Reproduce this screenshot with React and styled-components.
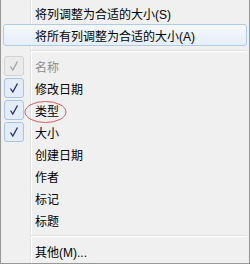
import React from 'react';
import styled, { createGlobalStyle } from 'styled-components';

const GlobalStyle = createGlobalStyle`
  html, body {
    margin: 0;
    padding: 0;
    background: #f0f0f0;
  }
`;

const Menu = styled.div`
  box-sizing: border-box;
  width: 250px;
  height: 264px;
  padding: 2px 2px 0 2px;
  border: 1px solid #979797;
  border-top: none;
  background: linear-gradient(
      to right,
      transparent 29px,
      #e2e3e3 29px,
      #e2e3e3 30px,
      #ffffff 30px,
      #ffffff 31px,
      transparent 31px
    ),
    #f0f0f0;
  font-family: 'Liberation Sans', 'Noto Sans CJK SC', sans-serif;
  font-size: 12px;
  color: #000;
`;

const Item = styled.div`
  position: relative;
  box-sizing: border-box;
  display: flex;
  align-items: center;
  height: 22px;
  border: 1px solid ${(p) => (p.active ? '#aecbe9' : 'transparent')};
  border-radius: 3px;
  background: ${(p) =>
    p.active ? 'linear-gradient(#f6f9fd, #e6eef9)' : 'transparent'};
  color: ${(p) => (p.disabled ? '#8d8d8d' : '#000')};
  white-space: nowrap;
`;

const Gutter = styled.div`
  display: flex;
  align-items: center;
  width: 31px;
  height: 100%;
`;

const CheckBox = styled.div`
  display: flex;
  align-items: center;
  justify-content: center;
  box-sizing: border-box;
  width: 20px;
  height: 20px;
  border: 1px solid ${(p) => (p.disabled ? '#d2d2d2' : '#a9c3e4')};
  border-radius: 3px;
  background: ${(p) => (p.disabled ? '#ebebeb' : '#e4ecf8')};
`;

const Separator = styled.div`
  height: 9px;
  margin-left: 28px;
  display: flex;
  flex-direction: column;
  justify-content: center;
  &::before {
    content: '';
    display: block;
    height: 1px;
    background: #e0e0e0;
  }
  &::after {
    content: '';
    display: block;
    height: 1px;
    background: #ffffff;
  }
`;

const Mark = styled.svg`
  position: absolute;
  left: 20px;
  top: 1px;
  overflow: visible;
`;

function Check({ disabled }) {
  return (
    <CheckBox disabled={disabled}>
      <svg width="18" height="18" viewBox="0 0 18 18">
        <path
          d="M5.5 9.5 L7.8 13 L12.5 4.5"
          fill="none"
          stroke={disabled ? '#a3a3a3' : '#1c2a8c'}
          strokeWidth="1.3"
        />
      </svg>
    </CheckBox>
  );
}

const columns = [
  { label: '名称', checked: true, disabled: true },
  { label: '修改日期', checked: true },
  { label: '类型', checked: true, marked: true },
  { label: '大小', checked: true },
  { label: '创建日期' },
  { label: '作者' },
  { label: '标记' },
  { label: '标题' },
];

export default function App() {
  return (
    <>
      <GlobalStyle />
      <Menu>
        <Item>
          <Gutter />
          将列调整为合适的大小(S)
        </Item>
        <Item active>
          <Gutter />
          将所有列调整为合适的大小(A)
        </Item>
        <Separator />
        {columns.map((c) => (
          <Item key={c.label} disabled={c.disabled}>
            <Gutter>{c.checked && <Check disabled={c.disabled} />}</Gutter>
            {c.label}
            {c.marked && (
              <Mark width="43" height="22" viewBox="0 0 43 22">
                <ellipse
                  cx="21.5"
                  cy="11"
                  rx="20.5"
                  ry="10.5"
                  fill="none"
                  stroke="#d6605c"
                  strokeWidth="1"
                />
              </Mark>
            )}
          </Item>
        ))}
        <Separator />
        <Item>
          <Gutter />
          其他(M)...
        </Item>
      </Menu>
    </>
  );
}
